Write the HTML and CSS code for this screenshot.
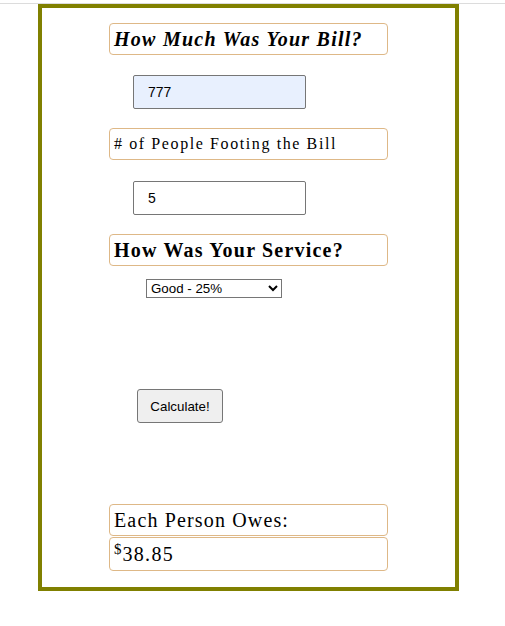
FILE: index.html
```html
<!DOCTYPE html>
<html>
<head>
<meta charset="utf-8">
<link rel="stylesheet" href="styles.css">
</head>
<body>
<div class="topline"></div>
<div class="calc">
  <div class="label label-bill">How Much Was Your Bill?</div>
  <input class="field field-filled" type="text" value="777">
  <div class="label label-people"># of People Footing the Bill</div>
  <input class="field field-people" type="text" value="5">
  <div class="label label-service">How Was Your Service?</div>
  <select class="service">
    <option>Good - 25%</option>
    <option>Great - 30%</option>
    <option>OK - 15%</option>
    <option>Bad - 10%</option>
  </select>
  <button class="calc-btn">Calculate!</button>
  <div class="label label-result">Each Person Owes:</div>
  <div class="label label-amount"><sup class="dollar">$</sup>38.85</div>
</div>
</body>
</html>
```

FILE: styles.css
```css
html, body {
  margin: 0;
  padding: 0;
  background: #ffffff;
}

body {
  padding-top: 3px;
  font-family: "Liberation Serif", "Times New Roman", serif;
  color: #000;
}

.topline {
  height: 1px;
  background: #dcdcdc;
}

.calc {
  box-sizing: border-box;
  width: 421px;
  margin-left: 38px;
  border: 4px solid #808000;
  padding: 15px 0 16px;
}

.label {
  box-sizing: border-box;
  width: 279px;
  height: 32px;
  margin: 0 auto;
  border: 1px solid #deb887;
  border-radius: 4px;
  display: flex;
  align-items: center;
  padding-left: 4px;
  white-space: nowrap;
}

.label-bill {
  font-size: 20px;
  font-weight: bold;
  font-style: italic;
  letter-spacing: 1.25px;
}

.label-people {
  margin-top: 19px;
  font-size: 16px;
  letter-spacing: 1.6px;
}

.label-service {
  margin-top: 19px;
  font-size: 20px;
  font-weight: bold;
  letter-spacing: 1.2px;
}

.field {
  display: block;
  box-sizing: border-box;
  width: 173px;
  height: 34px;
  margin-left: 91px;
  margin-top: 20px;
  padding: 0 0 0 14px;
  border: 1px solid #767676;
  border-radius: 2px;
  font-family: "Liberation Sans", Arial, sans-serif;
  font-size: 14px;
  color: #000;
  background: #ffffff;
}

.field-filled {
  background: #e8f0fe;
}

.field-people {
  margin-top: 21px;
}

.service {
  display: block;
  box-sizing: border-box;
  width: 136px;
  height: 19px;
  margin-left: 104px;
  margin-top: 13px;
  font-family: "Liberation Sans", Arial, sans-serif;
  font-size: 13.33px;
  border: 1px solid #767676;
  border-radius: 0;
  background: #fff;
  color: #000;
}

.calc-btn {
  display: block;
  box-sizing: border-box;
  width: 86px;
  height: 34px;
  margin-left: 95px;
  margin-top: 91px;
  font-family: "Liberation Sans", Arial, sans-serif;
  font-size: 13.33px;
  color: #000;
  background: #efefef;
  border: 1px solid #767676;
  border-radius: 3px;
  padding: 0;
}

.label-result {
  margin-top: 81px;
  font-size: 20px;
  letter-spacing: 1.15px;
}

.label-amount {
  margin-top: 1px;
  height: 34px;
  font-size: 20px;
  letter-spacing: 1.3px;
}

.dollar {
  font-size: 15px;
  letter-spacing: 0;
  align-self: flex-start;
  margin-top: 4px;
  margin-right: 1px;
  line-height: 1;
}
```
